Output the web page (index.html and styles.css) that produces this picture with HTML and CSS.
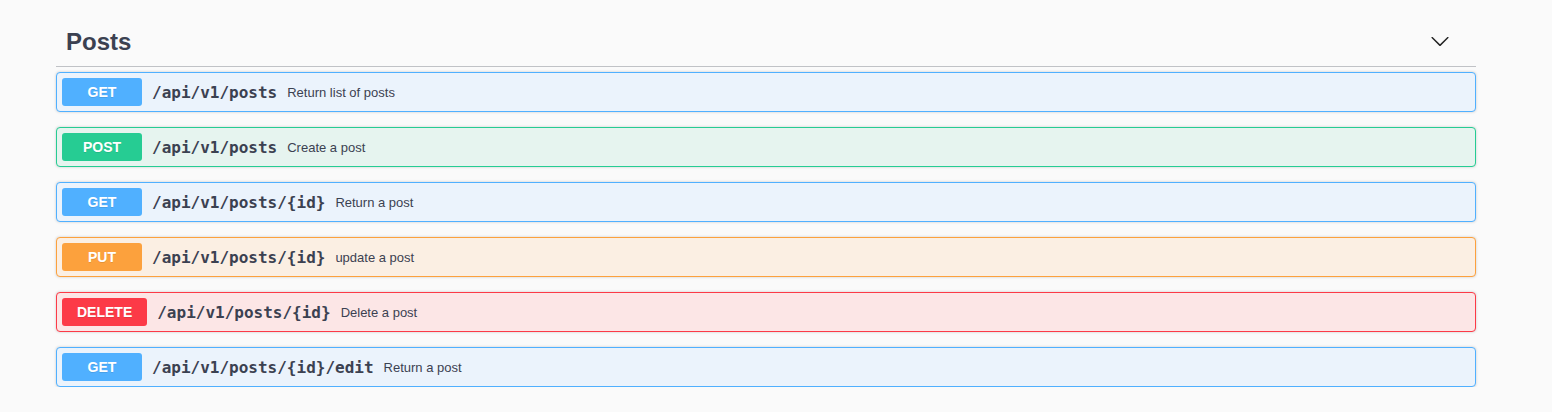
FILE: index.html
```html
<!DOCTYPE html>
<html>
<head>
<meta charset="utf-8">
<link rel="stylesheet" href="styles.css">
</head>
<body>
<div class="wrapper">
  <section class="tag-section">
    <h3 class="tag">
      <span class="tag-name">Posts</span>
      <button class="expand" aria-label="collapse">
        <svg width="20" height="20" viewBox="0 0 20 20"><path d="M17.418 6.109c.272-.268.709-.268.979 0s.271.701 0 .969l-7.908 7.83c-.27.268-.707.268-.979 0l-7.908-7.83c-.27-.268-.27-.701 0-.969.271-.268.709-.268.979 0L10 13.25l7.418-7.141z" fill="#222"/></svg>
      </button>
    </h3>
    <div class="ops">
      <div class="op get"><span class="method">GET</span><span class="path">/api/v1/posts</span><span class="desc">Return list of posts</span></div>
      <div class="op post"><span class="method">POST</span><span class="path">/api/v1/posts</span><span class="desc">Create a post</span></div>
      <div class="op get"><span class="method">GET</span><span class="path">/api/v1/posts/{id}</span><span class="desc">Return a post</span></div>
      <div class="op put"><span class="method">PUT</span><span class="path">/api/v1/posts/{id}</span><span class="desc">update a post</span></div>
      <div class="op delete"><span class="method">DELETE</span><span class="path">/api/v1/posts/{id}</span><span class="desc">Delete a post</span></div>
      <div class="op get"><span class="method">GET</span><span class="path">/api/v1/posts/{id}/edit</span><span class="desc">Return a post</span></div>
    </div>
  </section>
</div>
</body>
</html>
```

FILE: styles.css
```css
html, body {
  margin: 0;
  padding: 0;
  background: #fafafa;
}
body {
  font-family: "Liberation Sans", Arial, sans-serif;
  color: #3b4151;
}
.wrapper {
  width: 1420px;
  padding: 22px 0 0 56px;
}
.tag {
  display: flex;
  align-items: center;
  margin: 0 0 5px;
  padding: 8px 20px 12px 10px;
  height: 24px;
  font-size: 24px;
  font-weight: 700;
  line-height: 24px;
  color: #3b4151;
  border-bottom: 1px solid rgba(59, 65, 81, 0.3);
}
.tag-name {
  flex: 1;
}
.expand {
  border: none;
  background: none;
  padding: 0;
  margin: 0 6px 3px 0;
  width: 20px;
  height: 20px;
  display: flex;
}
.ops {
  display: flex;
  flex-direction: column;
  gap: 15px;
}
.op {
  display: flex;
  align-items: center;
  padding: 5px;
  border: 1px solid #000;
  border-radius: 4px;
  box-shadow: 0 0 3px rgba(0, 0, 0, 0.19);
}
.method {
  min-width: 80px;
  padding: 6px 0;
  box-sizing: border-box;
  text-align: center;
  font-size: 14px;
  line-height: 16px;
  font-weight: 700;
  color: #fff;
  border-radius: 3px;
  text-shadow: 0 1px 0 rgba(0, 0, 0, 0.1);
}
.delete .method {
  padding: 6px 15px;
}
.path {
  padding: 0 10px;
  font-family: "DejaVu Sans Mono", monospace;
  font-size: 16px;
  font-weight: 700;
  color: #3b4151;
}
.desc {
  font-size: 13px;
  color: #3b4151;
}
.get { background: #ebf3fc; border-color: #50b0ff; }
.get .method { background: #50b0ff; }
.post { background: #e6f4ef; border-color: #26cc93; }
.post .method { background: #26cc93; }
.put { background: #fbefe3; border-color: #fca13d; }
.put .method { background: #fca13d; }
.delete { background: #fce6e6; border-color: #fc3a47; }
.delete .method { background: #fc3a47; }
```
